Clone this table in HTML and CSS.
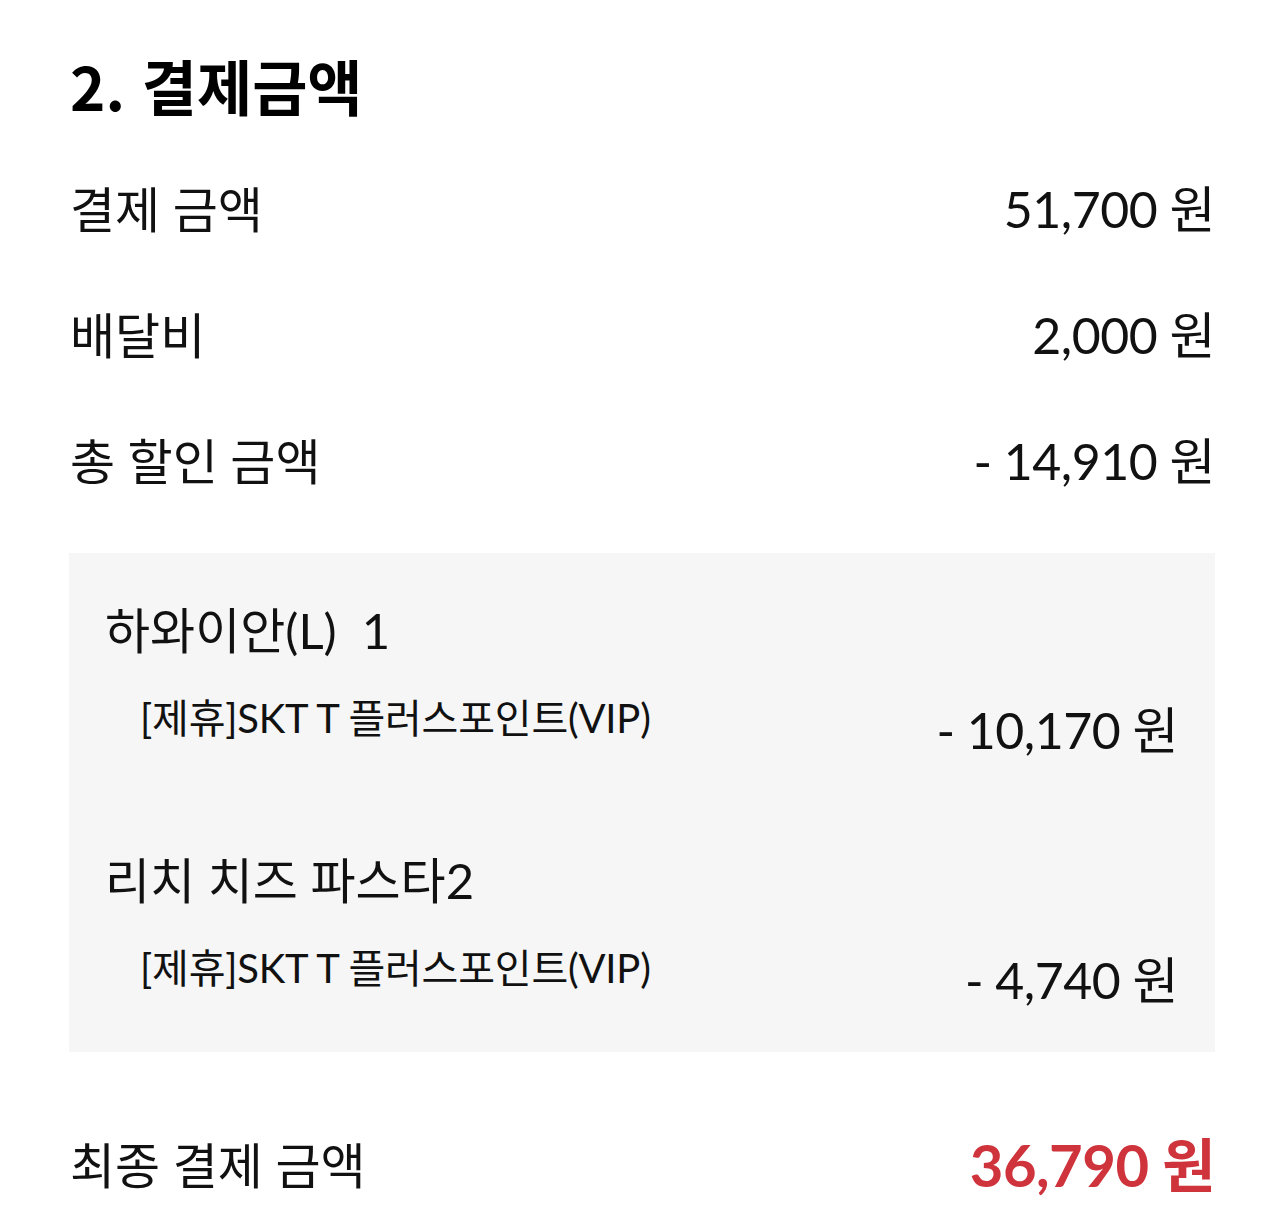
FILE: index.html
```html
<!DOCTYPE html>
<html lang="ko">
<head>
<meta charset="utf-8">
<link rel="stylesheet" href="styles.css">
</head>
<body>
<div class="page">
  <h2 class="title">2. 결제금액</h2>
  <div class="row"><span class="label">결제 금액</span><span class="amount">51,700 원</span></div>
  <div class="row"><span class="label">배달비</span><span class="amount">2,000 원</span></div>
  <div class="row"><span class="label">총 할인 금액</span><span class="amount">- 14,910 원</span></div>
  <div class="box">
    <div class="item">
      <div class="item-name">하와이안(L)&nbsp; 1</div>
      <div class="detail"><span class="sub">[제휴]SKT T 플러스포인트(VIP)</span><span class="amount sub-amount">- 10,170 원</span></div>
    </div>
    <div class="item">
      <div class="item-name">리치 치즈 파스타2</div>
      <div class="detail"><span class="sub">[제휴]SKT T 플러스포인트(VIP)</span><span class="amount sub-amount">- 4,740 원</span></div>
    </div>
  </div>
  <div class="row final"><span class="label">최종 결제 금액</span><span class="amount total">36,790 원</span></div>
</div>
</body>
</html>
```
FILE: styles.css
```css
html, body {
  margin: 0;
  padding: 0;
  background: #fff;
}
body {
  font-family: "Lato", "Noto Sans CJK KR", sans-serif;
  color: #111;
}
.page {
  padding: 50px 69px 0 70px;
}
.title {
  margin: 0;
  font-family: "Noto Sans CJK KR", sans-serif;
  font-weight: 700;
  font-size: 60px;
  line-height: 70px;
  color: #000;
}
.row {
  display: flex;
  justify-content: space-between;
  align-items: center;
  height: 126px;
}
.title + .row {
  margin-top: 26px;
}
.label {
  font-size: 49px;
  line-height: 60px;
}
.amount {
  font-size: 50px;
  line-height: 60px;
  letter-spacing: -0.5px;
}
.box {
  margin: 29px 0 0 -1px;
  background: #f6f6f6;
  padding: 47px 37px 42px 36px;
}
.item + .item {
  margin-top: 90px;
}
.item-name {
  font-size: 49px;
  line-height: 60px;
}
.detail {
  margin-top: 28px;
  padding-left: 35px;
  display: flex;
  justify-content: space-between;
  align-items: flex-start;
}
.sub {
  font-size: 40px;
  line-height: 60px;
  letter-spacing: -0.2px;
}
.sub-amount {
  margin-top: 12px;
}
.final {
  margin-top: 50px;
}
.total {
  font-weight: 700;
  color: #cf333b;
  font-size: 58px;
}
```
